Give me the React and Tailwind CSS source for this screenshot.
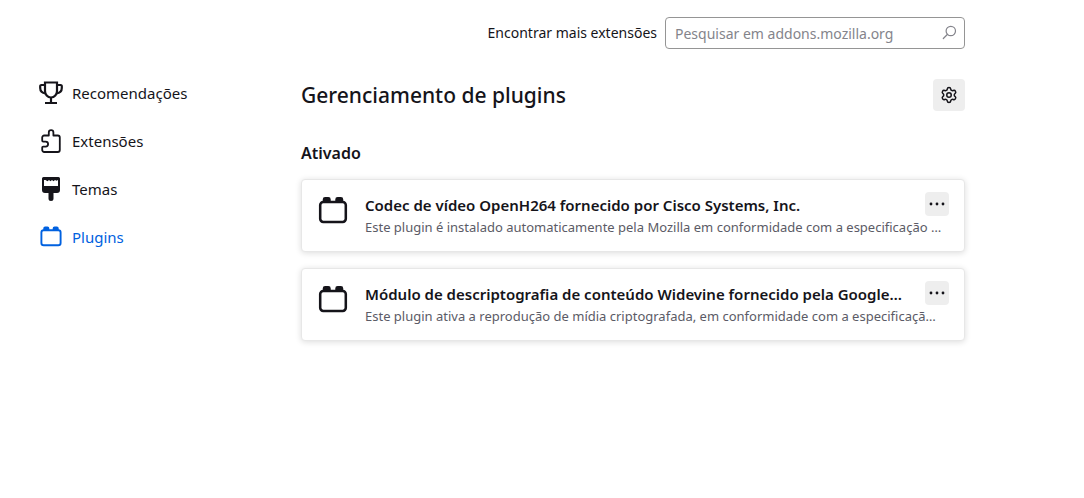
import React, { useState } from "react";
import { Settings } from "lucide-react";

const TrophyIcon = () => (
  <svg className="size-6 shrink-0" viewBox="0 0 24 24" fill="none" stroke="currentColor" strokeWidth="2.200">
    <path d="M6 1.500h12v8.500c0 3.500-2.500 6.500-6 6.500s-6-3-6-6.500z" />
    <path d="M6 4H2.500A1.200 1.200 0 0 0 1.200 5.200V7c0 3 1.800 5 5.600 5.500M18 4h3.500a1.200 1.200 0 0 1 1.300 1.200V7c0 3-1.800 5-5.600 5.500" />
    <path d="M12 16.500V22M6 22h12" />
  </svg>
);

const PuzzleIcon = () => (
  <svg className="size-6 shrink-0" viewBox="0 0 24 24" fill="none" stroke="currentColor" strokeWidth="1.800" strokeLinejoin="round">
    <path d="M9.800 6.500V3.400a2.300 2.300 0 0 1 4.600 0v3.100h4.400a2 2 0 0 1 2 2V21a2 2 0 0 1-2 2H5.200a2 2 0 0 1-2-2v-2.400a1 1 0 0 1 1-1h2.400a2.500 2.500 0 0 0 0-5H4.200a1 1 0 0 1-1-1V8.500a2 2 0 0 1 2-2z" />
  </svg>
);

const BrushIcon = () => (
  <svg className="size-6 shrink-0" viewBox="0 0 24 24" fill="currentColor">
    <path fillRule="evenodd" d="M4.500 0h15A1.500 1.500 0 0 1 21 1.500V13a3 3 0 0 1-3 3h-3.500v5.500a2.500 2.500 0 0 1-5 0V16H6a3 3 0 0 1-3-3V1.500A1.500 1.500 0 0 1 4.500 0zM5 3v6h14V3l-1.500.8-1.500-.8-1.500 1.200L13 3l-1.500 1.200L10 3 8.500 4.200 6.500 3z" />
  </svg>
);

const PluginIcon = ({ className }) => (
  <svg className={className} viewBox="0 0 24 24" fill="none">
    <path fill="currentColor" d="M4.300 5V3.300a1.800 1.800 0 0 1 1.800-1.800h2.400a1.800 1.800 0 0 1 1.800 1.800V5zM13.700 5V3.300a1.800 1.800 0 0 1 1.800-1.800h2.400a1.800 1.800 0 0 1 1.800 1.800V5z" />
    <rect x="2.400" y="5.200" width="19.200" height="15" rx="2.300" stroke="currentColor" strokeWidth="1.900" />
  </svg>
);

const SearchIcon = () => (
  <svg className="size-4" viewBox="0 0 16 16" fill="none" stroke="currentColor" strokeWidth="1.200" strokeLinecap="round">
    <circle cx="9.800" cy="6" r="4.700" />
    <path d="M6.300 9.500l-4 4" />
  </svg>
);

const MoreIcon = () => (
  <svg className="size-4" viewBox="0 0 16 16" fill="currentColor">
    <circle cx="2" cy="8" r="1.400" />
    <circle cx="8" cy="8" r="1.400" />
    <circle cx="14" cy="8" r="1.400" />
  </svg>
);

const categories = [
  { id: "discover", label: "Recomendações", icon: <TrophyIcon /> },
  { id: "extension", label: "Extensões", icon: <PuzzleIcon /> },
  { id: "theme", label: "Temas", icon: <BrushIcon /> },
  { id: "plugin", label: "Plugins", icon: <PluginIcon className="size-6 shrink-0" /> },
];

const plugins = [
  {
    id: "openh264",
    name: "Codec de vídeo OpenH264 fornecido por Cisco Systems, Inc.",
    description:
      "Este plugin é instalado automaticamente pela Mozilla em conformidade com a especificação …",
  },
  {
    id: "widevine",
    name: "Módulo de descriptografia de conteúdo Widevine fornecido pela Google…",
    description:
      "Este plugin ativa a reprodução de mídia criptografada, em conformidade com a especificaçã…",
  },
];

const PluginCard = ({ plugin }) => (
  <li className="flex rounded-sm border border-[#e7e7e7] bg-white px-[15px] pt-3 pb-[15px] shadow-[0_1px_6px_rgba(0,0,0,0.14)]">
    <PluginIcon className="mt-[3px] size-8 shrink-0" />
    <div className="ml-4 min-w-0 flex-1">
      <div className="flex items-start justify-between gap-4">
        <h3 className="truncate text-[15px] leading-[26px] font-semibold">{plugin.name}</h3>
        <button
          className="flex size-6 shrink-0 items-center justify-center rounded-sm bg-[#eeeeee] hover:bg-[#e0e0e0]"
          aria-label="Mais opções"
        >
          <MoreIcon />
        </button>
      </div>
      <p className="truncate text-[13px] leading-[18px] text-[#5b5b66]">{plugin.description}</p>
    </div>
  </li>
);

const App = () => {
  const [selected, setSelected] = useState("plugin");
  const [query, setQuery] = useState("");

  return (
    <div className="flex min-h-screen bg-white font-['Noto_Sans',sans-serif] text-[#15141a]">
      <nav className="w-[273px] shrink-0 pt-[69px] pl-[39px]">
        {categories.map((category) => (
          <button
            key={category.id}
            className={`flex h-12 w-full items-center gap-[9px] text-left text-[15px] ${
              selected === category.id ? "text-[#0061e0]" : ""
            }`}
            onClick={() => setSelected(category.id)}
          >
            {category.icon}
            {category.label}
          </button>
        ))}
      </nav>

      <main className="mx-7 max-w-[664px] min-w-0 flex-1 pt-[17px]">
        <form className="flex items-center justify-end gap-2" onSubmit={(e) => e.preventDefault()}>
          <label htmlFor="search" className="text-sm">
            Encontrar mais extensões
          </label>
          <div className="relative w-[300px]">
            <input
              id="search"
              type="text"
              className="h-8 w-full rounded-sm border border-[#959595] pr-8 pl-[9px] text-sm placeholder:text-[#84848b]"
              placeholder="Pesquisar em addons.mozilla.org"
              value={query}
              onChange={(e) => setQuery(e.target.value)}
            />
            <span className="absolute top-2 right-2 text-[#84848b]">
              <SearchIcon />
            </span>
          </div>
        </form>

        <div className="mt-[30px] flex items-center justify-between">
          <h1 className="text-[21px] leading-8 font-[550]">Gerenciamento de plugins</h1>
          <button
            className="flex size-8 items-center justify-center rounded-sm bg-[#eeeeee] hover:bg-[#e0e0e0]"
            aria-label="Ferramentas para todas as extensões"
          >
            <Settings className="size-[18px]" />
          </button>
        </div>

        <h2 className="mt-[30px] text-base leading-6 font-semibold">Ativado</h2>
        <ul className="mt-[14px] flex flex-col gap-4">
          {plugins.map((plugin) => (
            <PluginCard key={plugin.id} plugin={plugin} />
          ))}
        </ul>
      </main>
    </div>
  );
};

export default App;
